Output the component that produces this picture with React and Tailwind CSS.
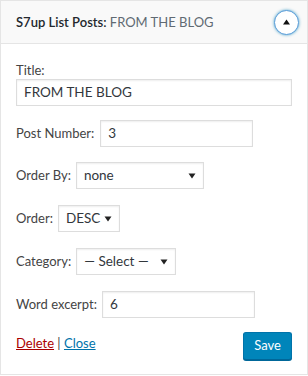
export default function App() {
  const inputCls =
    "h-[27px] border border-[#ddd] bg-white shadow-[inset_0_1px_2px_rgba(0,0,0,0.07)] text-[13.5px] text-[#32373c] flex items-center pl-[7px]";
  const Caret = () => (
    <svg width="8" height="6" viewBox="0 0 8 6" className="shrink-0">
      <path d="M0.5 0.5 L7.5 0.5 L4 5.5 Z" fill="#222" />
    </svg>
  );
  const Select = ({ w, text }) => (
    <div className={`${inputCls} pr-[7px] justify-between ${w}`}>
      <span>{text}</span>
      <Caret />
    </div>
  );
  return (
    <div className="w-[308px] h-[376px] bg-white font-['Lato',sans-serif] text-[13px] text-[#444]">
      <div className="h-[375px] border border-[#e5e5e5] flex flex-col">
        <div className="h-[43px] shrink-0 bg-[#f9f9f9] border-b border-[#e5e5e5] flex items-center justify-between pl-[15px] pr-[8px]">
          <div className="text-[13px] font-semibold text-[#23282d] leading-none">
            S7up List Posts: <span className="font-normal text-[#606a73]">FROM THE BLOG</span>
          </div>
          <div className="w-[25px] h-[25px] rounded-full bg-white border border-[#5b9dd9] shadow-[0_0_3px_rgba(30,140,190,0.8)] flex items-center justify-center">
            <svg width="9" height="6" viewBox="0 0 9 6">
              <path d="M1 5.5 L8 5.5 L4.5 0.5 Z" fill="#111" />
            </svg>
          </div>
        </div>
        <div className="px-[15px] flex flex-col">
          <div className="mt-[17px] h-[18px] leading-[18px]">Title:</div>
          <div className={`${inputCls} w-[276px]`}>FROM THE BLOG</div>
          <div className="mt-[14px] flex items-center gap-[6px]">
            <span>Post Number:</span>
            <div className={`${inputCls} w-[153px]`}>3</div>
          </div>
          <div className="mt-[15px] flex items-center gap-[5px]">
            <span>Order By:</span>
            <Select w="w-[128px]" text="none" />
          </div>
          <div className="mt-[16px] flex items-center gap-[5px]">
            <span>Order:</span>
            <Select w="w-[62px]" text="DESC" />
          </div>
          <div className="mt-[16px] flex items-center gap-[5px]">
            <span>Category:</span>
            <Select w="w-[100px]" text="— Select —" />
          </div>
          <div className="mt-[16px] flex items-center gap-[5px]">
            <span>Word excerpt:</span>
            <div className={`${inputCls} w-[153px]`}>6</div>
          </div>
          <div className="mt-[14px] flex items-start justify-between">
            <div className="mt-[2px]">
              <a className="text-[#a00] underline">Delete</a>
              <span> | </span>
              <a className="text-[#0073aa] underline">Close</a>
            </div>
            <button className="h-[28px] px-[10px] rounded-[3px] bg-[#0085ba] border border-[#0073aa] border-b-[#006799] shadow-[0_1px_0_#006799] text-white text-[13px]">
              Save
            </button>
          </div>
        </div>
      </div>
    </div>
  );
}
